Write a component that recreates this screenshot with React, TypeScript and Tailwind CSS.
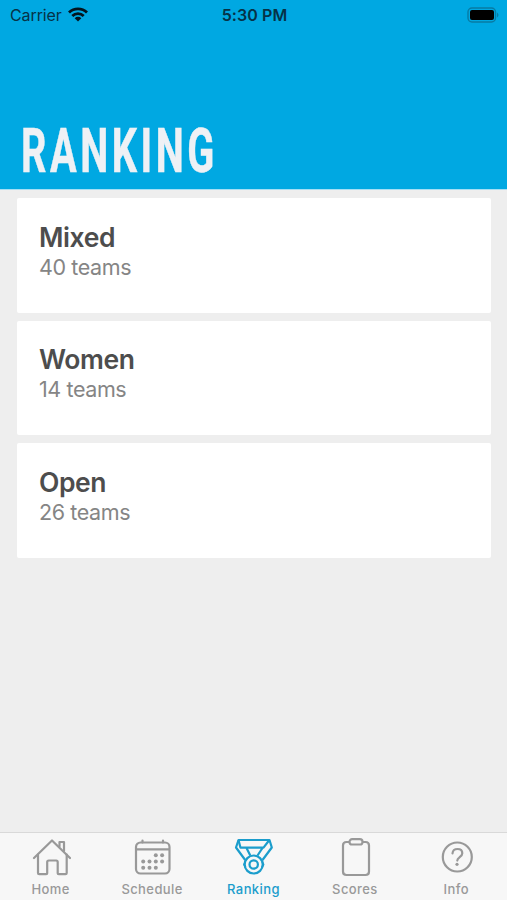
import type { ReactNode } from 'react'

interface Division {
    name: string
    teams: number
}

interface Tab {
    name: string
    icon: ReactNode
    active?: boolean
}

const divisions: Division[] = [
    { name: 'Mixed', teams: 40 },
    { name: 'Women', teams: 14 },
    { name: 'Open', teams: 26 },
]

function HomeIcon() {
    return (
        <svg width="40" height="40" viewBox="0 0 40 40" fill="none" stroke="currentColor" strokeWidth="2.200" strokeLinejoin="round" strokeLinecap="round">
            <path d="M3 21 21 3.500 39 21" />
            <path d="M7 17.500V36q0 1.200 1.200 1.200h7q1 0 1-1V25q0-1.500 1.500-1.500h7.500q1.500 0 1.500 1.500v11.200q0 1 1 1h6.800q1.200 0 1.200-1.200V17.500" />
            <path d="M28.500 9.500V5h4.500v9" />
        </svg>
    )
}

const calendarDots = [
    [24.3, 18.2], [30.6, 18.2],
    [11.7, 24.5], [18, 24.5], [24.3, 24.5], [30.6, 24.5],
    [11.7, 30.7], [18, 30.7], [24.3, 30.7],
]

function CalendarIcon() {
    return (
        <svg width="40" height="40" viewBox="0 0 40 40" fill="none" stroke="currentColor" strokeWidth="2.200" strokeLinecap="round">
            <rect x="4" y="5.500" width="33.500" height="31" rx="4.500" />
            <path d="M4.500 12.300h32.500M10.500 3.500v2M31 3.500v2" />
            {calendarDots.map(([x, y]) => (
                <circle key={`${x}-${y}`} cx={x - 0.5} cy={y} r="2" fill="currentColor" stroke="none" />
            ))}
        </svg>
    )
}

function MedalIcon() {
    return (
        <svg width="40" height="40" viewBox="0 0 40 40" fill="none" stroke="currentColor" strokeWidth="2.200" strokeLinejoin="round">
            <path d="m12.200 23-9.200-12.500L5.500 3H36.500l2.300 7.500L29.500 23" />
            <path d="m5.500 3 2 7.700H30.500L36 3.500M13.500 11l3.800 7.500M29.500 11l-5 7.500" />
            <path d="M12.500 24.500 11 27.500l1.500 3M29 24.500l1.500 3-1.500 3" strokeWidth="1.800" />
            <circle cx="20.700" cy="27.500" r="9" />
            <circle cx="20.700" cy="27.500" r="4.200" />
        </svg>
    )
}

function ClipboardIcon() {
    return (
        <svg width="40" height="40" viewBox="0 0 40 40" fill="none" stroke="currentColor" strokeWidth="2.200">
            <path d="M14.500 5H11.500q-3.500 0-3.500 3.500v26q0 3.500 3.500 3.500h19q3.500 0 3.500-3.500V8.500q0-3.500-3.500-3.500H27.500" />
            <rect x="14.500" y="2.200" width="13" height="5.300" rx="2.600" />
        </svg>
    )
}

function InfoIcon() {
    return (
        <svg width="40" height="40" viewBox="0 0 40 40" fill="none" stroke="currentColor" strokeWidth="2.200" strokeLinecap="round">
            <circle cx="21.300" cy="20" r="14.500" />
            <path d="M16.500 16.300q.500-4.300 5-4.300 4.800 0 4.800 4.300 0 2.200-2.800 4-2.200 1.500-2.200 3.300" />
            <circle cx="21" cy="27.300" r="1.600" fill="currentColor" stroke="none" />
        </svg>
    )
}

const tabs: Tab[] = [
    { name: 'Home', icon: <HomeIcon /> },
    { name: 'Schedule', icon: <CalendarIcon /> },
    { name: 'Ranking', icon: <MedalIcon />, active: true },
    { name: 'Scores', icon: <ClipboardIcon /> },
    { name: 'Info', icon: <InfoIcon /> },
]

function StatusBar() {
    return (
        <div className="grid h-[29px] grid-cols-3 items-center pl-2.5 pr-2 text-[#063247]">
            <div className="flex items-center gap-[6px]">
                <span className="text-[16px] tracking-[-0.100px]">Carrier</span>
                <svg width="20" height="15" viewBox="0 0 20 15" fill="none" stroke="#03151f" strokeWidth="2.800">
                    <path d="M1 5.500a13 13 0 0 1 18 0M4.300 9a8.200 8.200 0 0 1 11.400 0" />
                    <path d="m10 14.500-3.300-3.300a4.700 4.700 0 0 1 6.600 0z" fill="#03151f" stroke="none" />
                </svg>
            </div>
            <span className="text-center text-[16px] font-semibold tracking-[0.1px]">5:30 PM</span>
            <svg className="justify-self-end" width="32" height="16" viewBox="0 0 32 16">
                <rect x="1" y="1" width="27.500" height="14" rx="4" fill="none" stroke="#087ba3" strokeWidth="1.400" />
                <rect x="3" y="3" width="24" height="10" rx="2" fill="#000" />
                <path d="M30 5.500q3 2.500 0 5z" fill="#087ba3" />
            </svg>
        </div>
    )
}

export default function App() {
    return (
        <div className="flex h-[900px] w-full flex-col overflow-hidden bg-[#eeeeee] font-['Inter',sans-serif]">
            <header className="flex h-[190px] shrink-0 flex-col justify-between border-b border-[#a5dff5] bg-[#00a8e2]">
                <StatusBar />
                <h1 className="mb-[7px] ml-[21px] origin-left scale-x-[0.65] whitespace-nowrap font-['Roboto',sans-serif] text-[61px] font-bold leading-[61px] tracking-[5.500px] text-[#eef1f5] [-webkit-text-stroke:0.500px_#eef1f5]">
                    RANKING
                </h1>
            </header>

            <main className="flex flex-1 flex-col gap-[8.200px] pl-[17px] pr-4 pt-2">
                {divisions.map((division) => (
                    <section key={division.name} className="h-[114.500px] rounded-[2px] bg-white px-[22px] pt-[22.500px]">
                        <h2 className="text-[26.500px] font-semibold leading-[32px] tracking-[-0.400px] text-[#4d4d4d]">
                            {division.name}
                        </h2>
                        <p className="text-[21.500px] leading-[29px] tracking-[-0.400px] text-[#858585]">{division.teams} teams</p>
                    </section>
                ))}
            </main>

            <nav className="grid h-[68px] shrink-0 grid-cols-5 border-t border-[#d9d9d9] bg-[#f7f7f7]">
                {tabs.map((tab) => (
                    <div
                        key={tab.name}
                        className={`flex flex-col items-center pt-[4px] ${tab.active ? 'text-[#1b9dcc]' : 'text-[#999999]'}`}
                    >
                        {tab.icon}
                        <span className="mt-[4px] text-[13px] font-medium leading-[16px] tracking-[0.400px]">{tab.name}</span>
                    </div>
                ))}
            </nav>
        </div>
    )
}
